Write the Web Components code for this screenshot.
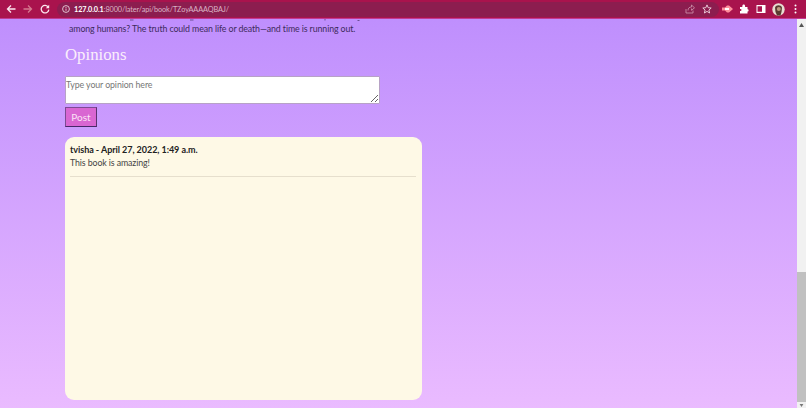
<!DOCTYPE html>
<html>
<head>
<meta charset="utf-8">
<title>Opinions</title>
<style>
  html, body { margin: 0; height: 100%; overflow: hidden; }
  body { font-family: Lato, "Liberation Sans", sans-serif; }
</style>
</head>
<body>
<browser-window>
  <browser-bar slot="bar" url-host="127.0.0.1" url-rest=":8000/later/api/book/TZoyAAAAQBAJ/"></browser-bar>
  <book-page>
    <p class="tail" slot="tail">among humans? The truth could mean life or death—and time is running out.</p>
    <opinion-form slot="form"></opinion-form>
    <opinion-list slot="list">
      <opinion-item author="tvisha" date="April 27, 2022, 1:49 a.m.">This book is amazing!</opinion-item>
    </opinion-list>
  </book-page>
</browser-window>

<script>
// Window frame : barre du navigateur, page, barre de défilement
class BrowserWindow extends HTMLElement {
  constructor() {
    super();
    this.attachShadow({ mode: 'open' });
    this.shadowRoot.innerHTML = `
      <style>
        :host { display: flex; flex-direction: column; width: 806px; height: 408px; overflow: hidden; }
        .main { flex: 1; display: flex; min-height: 0; }
        .view { flex: 1; min-width: 0; overflow: hidden;
          background: linear-gradient(180deg, #bf8ffd 0%, #eabbff 100%); }
        .scroll { width: 9px; background: #f1f1f1; display: flex; flex-direction: column; }
        .arrow { flex: none; display: flex; align-items: center; justify-content: center; }
        .arrow.up { height: 12px; }
        .arrow.down { height: 6px; }
        .track { flex: 1; display: flex; flex-direction: column; justify-content: flex-end; }
        .thumb { height: 130px; background: #c0c0c0; }
      </style>
      <slot name="bar"></slot>
      <div class="main">
        <div class="view"><slot></slot></div>
        <div class="scroll">
          <div class="arrow up"><svg width="5" height="4" viewBox="0 0 5 4"><path d="M2.5 0 5 4H0z" fill="#555"/></svg></div>
          <div class="track"><div class="thumb"></div></div>
          <div class="arrow down"><svg width="5" height="3" viewBox="0 0 5 4"><path d="M0 0h5L2.5 4z" fill="#777"/></svg></div>
        </div>
      </div>
    `;
  }
}

// Barre d'adresse et icônes d'extensions
class BrowserBar extends HTMLElement {
  constructor() {
    super();
    this.attachShadow({ mode: 'open' });
  }

  connectedCallback() {
    const host = this.getAttribute('url-host');
    const rest = this.getAttribute('url-rest');
    this.shadowRoot.innerHTML = `
      <style>
        :host { display: flex; align-items: center; height: 18px; flex: none; background: #a9134d;
          border-bottom: 1px solid #c23a94; color: #fff; font-family: Lato, "Liberation Sans", sans-serif; }
        svg { display: block; flex: none; }
        .cell { width: 17px; display: flex; align-items: center; justify-content: center; flex: none; }
        .nav { display: flex; align-items: center; padding-left: 2.5px; }
        .omni { flex: 1; height: 15px; margin-left: 3.5px; display: flex; align-items: center;
          background: #8c1d4f; border-radius: 8px; padding: 0 3.5px 0 5px; min-width: 0; }
        .url { margin-left: 4px; font-size: 7.3px; letter-spacing: -.1px; white-space: nowrap; color: #d9b4c5; }
        .url b { color: #fff; font-weight: 700; }
        .right { margin-left: auto; display: flex; align-items: center; }
        .ext { display: flex; align-items: center; padding-right: 2.5px; }
      </style>
      <div class="nav">
        <div class="cell"><svg width="10" height="10" viewBox="0 0 10 10"><path d="M9.500 5H1.500M5 1.500 1.500 5 5 8.500" fill="none" stroke="#fbe6ee" stroke-width="1.3"/></svg></div>
        <div class="cell"><svg width="10" height="10" viewBox="0 0 10 10"><path d="M.5 5h8M5 1.500 8.500 5 5 8.500" fill="none" stroke="#d5798f" stroke-width="1.3"/></svg></div>
        <div class="cell"><svg width="10" height="10" viewBox="0 0 10 10"><path d="M8.300 3.200A3.800 3.800 0 1 0 8.800 5.600" fill="none" stroke="#fbe6ee" stroke-width="1.3"/><path d="M9.200 .8v3.400H5.800z" fill="#fbe6ee"/></svg></div>
      </div>
      <div class="omni">
        <svg width="8" height="8" viewBox="0 0 8 8"><circle cx="4" cy="4" r="3.400" fill="none" stroke="#e8d4dc" stroke-width=".9"/><path d="M4 3.500v2.300M4 2v.9" stroke="#e8d4dc" stroke-width=".9"/></svg>
        <span class="url"><b>${host}</b>${rest}</span>
        <div class="right">
          <div class="cell"><svg width="10" height="10" viewBox="0 0 10 10"><path d="M1 5v4h7V6.500M3 6.500C3 4 4.500 3 6.500 3V1L9.500 3.800 6.500 6.300V4.500" fill="none" stroke="#c88ba5" stroke-width=".9"/></svg></div>
          <div class="cell"><svg width="10" height="10" viewBox="0 0 10 10"><path d="M5 .9 6.200 3.700 9.200 4 6.900 6 7.600 9 5 7.400 2.400 9 3.100 6 .8 4 3.800 3.700z" fill="none" stroke="#f0d8e2" stroke-width=".9"/></svg></div>
        </div>
      </div>
      <div class="ext">
        <div class="cell"><svg width="11" height="8" viewBox="0 0 11 8"><path d="M0 2.500h3L5 .5h2L11 4 7 7.500H5l-2-2H0z" fill="#ff8d9d"/><path d="M3 4h4" stroke="#fff" stroke-width="2"/></svg></div>
        <div class="cell"><svg width="10" height="10" viewBox="0 0 10 10"><path d="M1 3h2.300C3.200 1 4 .6 4.700 .6S6.300 1 6.100 3H8.500V5.300C10 5 10 8 8.500 7.500V9.500H1V7C3 7.800 3 4.300 1 5.200z" fill="#fff"/></svg></div>
        <div class="cell"><svg width="10" height="10" viewBox="0 0 10 10"><path fill-rule="evenodd" d="M.5 1h9v8h-9zM1.500 2.200v5.600h4.500V2.200z" fill="#fff"/></svg></div>
        <div class="cell"><svg width="13" height="13" viewBox="0 0 13 13"><circle cx="6.500" cy="6.500" r="6.200" fill="#e8dcd2"/><path d="M3 4.500C4 1.500 9 1.500 10 4.500L9.500 9 8.500 12.500H5L3.500 9z" fill="#5a3a30"/><circle cx="6.800" cy="6" r="2" fill="#c09a80"/></svg></div>
        <div class="cell"><svg width="3" height="10" viewBox="0 0 3 10"><circle cx="1.500" cy="1.500" r="1" fill="#fff"/><circle cx="1.500" cy="5" r="1" fill="#fff"/><circle cx="1.500" cy="8.500" r="1" fill="#fff"/></svg></div>
      </div>
    `;
  }
}

// Contenu de la page du livre
class BookPage extends HTMLElement {
  constructor() {
    super();
    this.attachShadow({ mode: 'open' });
    this.shadowRoot.innerHTML = `
      <style>
        :host { display: block; padding-left: 65px; width: 357px; }
        .cut { display: block; width: 300px; height: 3px; }
        ::slotted(.tail) { margin: 0 0 0 4px; font-size: 8.8px; letter-spacing: -.1px; line-height: 13px; white-space: nowrap; color: #3e2a5c; }
      </style>
      <!-- bas de la ligne précédente, coupée par la barre -->
      <svg class="cut" viewBox="0 0 300 3"><path d="M65 1h3.500M125 1h3.500M260 0v1.500M292.500 1.500h2" stroke="#6b4f94" stroke-width="1" fill="none"/></svg>
      <slot name="tail"></slot>
      <slot name="form"></slot>
      <slot name="list"></slot>
    `;
  }
}

// Formulaire pour poster une opinion
class OpinionForm extends HTMLElement {
  constructor() {
    super();
    this.attachShadow({ mode: 'open' });
    this.shadowRoot.innerHTML = `
      <style>
        :host { display: block; }
        h2 { margin: 8px 0 9px; font: 400 16.8px/24px "Liberation Serif", serif; color: #fbeefb; }
        textarea { display: block; box-sizing: border-box; width: 315px; height: 28px; margin: 0; padding: 1px 0;
          background: #fff; border: 1px solid #b7a2c6; border-radius: 1px; outline: none;
          font: 8.8px/13px Lato, "Liberation Sans", sans-serif; letter-spacing: -.1px; color: #333; }
        textarea::placeholder { color: #777; opacity: 1; }
        button { display: block; width: 32px; height: 20px; margin: 3px 0 0; padding: 0;
          background: #d966d2; color: #fbe3f6; border-style: solid; border-width: 1px 1.5px 1.5px 1px;
          border-color: #7d4a93 #5b3170 #46286a #7d4a93;
          font: 10px Lato, "Liberation Sans", sans-serif; }
      </style>
      <h2>Opinions</h2>
      <textarea placeholder="Type your opinion here"></textarea>
      <button type="button">Post</button>
    `;
  }
}

// Carte qui contient la liste des opinions
class OpinionList extends HTMLElement {
  constructor() {
    super();
    this.attachShadow({ mode: 'open' });
    this.shadowRoot.innerHTML = `
      <style>
        :host { display: block; box-sizing: border-box; width: 357px; height: 263px; margin-top: 10px;
          padding: 6px 6px 6px 5px; background: #fef9e6; border-radius: 9px; }
      </style>
      <slot></slot>
    `;
  }
}

class OpinionItem extends HTMLElement {
  constructor() {
    super();
    this.attachShadow({ mode: 'open' });
  }

  connectedCallback() {
    const author = this.getAttribute('author');
    const date = this.getAttribute('date');
    this.shadowRoot.innerHTML = `
      <style>
        :host { display: block; padding-bottom: 7px; border-bottom: 1px solid #e6dfcd;
          font: 8.8px/13px Lato, "Liberation Sans", sans-serif; letter-spacing: -.1px; color: #444; }
        .head { font-size: 9px; letter-spacing: -.05px; font-weight: 700; color: #222; }
      </style>
      <div class="head">${author} - ${date}</div>
      <div><slot></slot></div>
    `;
  }
}

customElements.define('browser-window', BrowserWindow);
customElements.define('browser-bar', BrowserBar);
customElements.define('book-page', BookPage);
customElements.define('opinion-form', OpinionForm);
customElements.define('opinion-list', OpinionList);
customElements.define('opinion-item', OpinionItem);
</script>
</body>
</html>
